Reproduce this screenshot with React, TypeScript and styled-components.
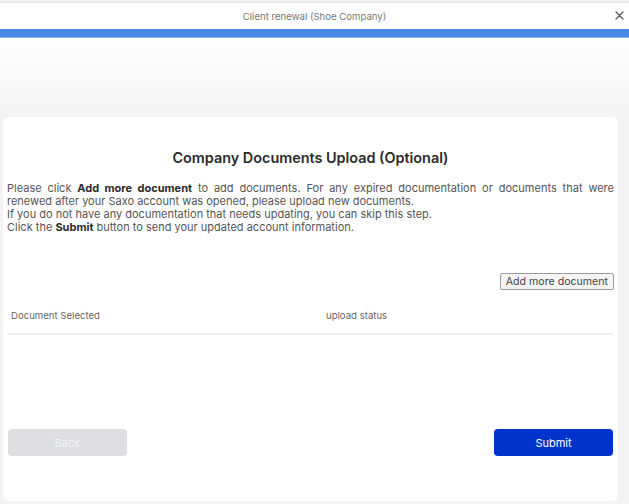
import React from 'react';
import styled, { createGlobalStyle } from 'styled-components';

const GlobalStyle = createGlobalStyle`
    html, body {
        margin: 0;
        padding: 0;
        background: #f2f2f2;
    }
    body {
        font-family: Inter, 'Noto Sans', sans-serif;
        color: #444;
    }
`;

const Window = styled.div`
    width: 629px;
    height: 504px;
    display: flex;
    flex-direction: column;
    overflow: hidden;
`;

const TitleBar = styled.div`
    height: 26px;
    margin-top: 2px;
    border-top: 1px solid #e3e3e3;
    background: #fff;
    position: relative;
    display: flex;
    align-items: center;
    justify-content: center;
    font-size: 9.6px;
    color: #777;
`;

const CloseButton = styled.button`
    position: absolute;
    right: 3px;
    top: 5px;
    width: 14px;
    height: 14px;
    padding: 0;
    border: none;
    background: transparent;
    display: flex;
    align-items: center;
    justify-content: center;
    cursor: pointer;
`;

const ProgressBar = styled.div`
    height: 8px;
    background: #4a86e8;
    border-bottom: 1px solid #8fb4f2;
`;

const Content = styled.div`
    flex: 1;
    display: flex;
    flex-direction: column;
    padding: 79px 11px 3px 3px;
    background: linear-gradient(#ffffff 0px, #f3f3f3 78px);
`;

const Card = styled.div`
    flex: 1;
    display: flex;
    flex-direction: column;
    background: #fff;
    border-radius: 6px;
    padding: 33px 4px 45px 4px;
`;

const Heading = styled.h2`
    margin: 0;
    text-align: center;
    font-size: 14.4px;
    line-height: 16px;
    font-weight: 600;
    color: #2b2b2b;
`;

const Intro = styled.div`
    margin-top: 16px;
    font-size: 11px;
    line-height: 13px;
    color: #555;

    b {
        font-weight: 700;
        color: #2b2b2b;
    }
`;

const Justified = styled.p`
    margin: 0;
    text-align: justify;
`;

const Line = styled.p`
    margin: 0;
`;

const Toolbar = styled.div`
    margin-top: 39px;
    display: flex;
    justify-content: flex-end;
`;

const AddButton = styled.button`
    height: 17px;
    padding: 0 5px;
    font-family: inherit;
    font-size: 10.6px;
    color: #444;
    background: #f4f4f4;
    border: 1px solid #9d9d9d;
    border-radius: 2px;
    cursor: pointer;
`;

const TableHeader = styled.div`
    margin: 19px 1px 0 0;
    display: grid;
    grid-template-columns: 315px 1fr;
    padding: 0 0 10px 4px;
    border-bottom: 2px solid #ececec;
    font-size: 9.6px;
    line-height: 14px;
    color: #666;
`;

const Spacer = styled.div`
    flex: 1;
`;

const Actions = styled.div`
    display: flex;
    justify-content: space-between;
    padding: 0 1px 0 1px;
`;

const ActionButton = styled.button<{ primary?: boolean }>`
    width: 119px;
    height: 27px;
    border: none;
    border-radius: 4px;
    font-family: inherit;
    font-size: 11px;
    color: ${p => (p.primary ? '#ffffff' : '#f2f3f5')};
    background: ${p => (p.primary ? '#0033cc' : '#dcdee2')};
    cursor: ${p => (p.primary ? 'pointer' : 'default')};
`;

export default function App() {
    return (
        <>
            <GlobalStyle />
            <Window>
                <TitleBar>
                    Client renewal (Shoe Company)
                    <CloseButton aria-label="Close">
                        <svg width="9" height="9" viewBox="0 0 9 9">
                            <path d="M1 1 L8 8 M8 1 L1 8" stroke="#555" strokeWidth="1.3" strokeLinecap="round" />
                        </svg>
                    </CloseButton>
                </TitleBar>
                <ProgressBar />
                <Content>
                    <Card>
                        <Heading>Company Documents Upload (Optional)</Heading>
                        <Intro>
                            <Justified>
                                Please click <b>Add more document</b> to add documents. For any expired documentation or documents that were renewed after your Saxo account was opened, please upload new documents.
                            </Justified>
                            <Line>If you do not have any documentation that needs updating, you can skip this step.</Line>
                            <Line>
                                Click the <b>Submit</b> button to send your updated account information.
                            </Line>
                        </Intro>
                        <Toolbar>
                            <AddButton>Add more document</AddButton>
                        </Toolbar>
                        <TableHeader>
                            <div>Document Selected</div>
                            <div>upload status</div>
                        </TableHeader>
                        <Spacer />
                        <Actions>
                            <ActionButton disabled>Back</ActionButton>
                            <ActionButton primary>Submit</ActionButton>
                        </Actions>
                    </Card>
                </Content>
            </Window>
        </>
    );
}
